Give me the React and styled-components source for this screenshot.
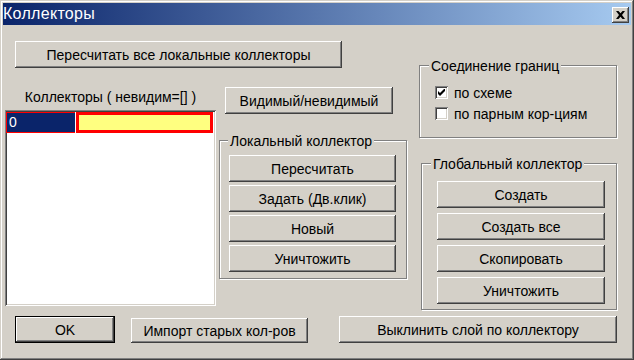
import React from "react";
import styled, { createGlobalStyle } from "styled-components";

const Global = createGlobalStyle`
  html, body { margin: 0; padding: 0; background: #d4d0c8; }
  body { font-family: "Liberation Sans", Arial, sans-serif; font-size: 14px; color: #000; }
  * { box-sizing: border-box; }
`;

const raised = `
  box-shadow: inset -1px -1px #404040, inset 1px 1px #ffffff,
    inset -2px -2px #808080, inset 2px 2px #d4d0c8;
`;

const sunken = `
  box-shadow: inset 1px 1px #808080, inset -1px -1px #ffffff,
    inset 2px 2px #404040, inset -2px -2px #d4d0c8;
`;

const Window = styled.div`
  width: 634px;
  height: 360px;
  padding: 3px;
  background: #d4d0c8;
  box-shadow: inset -1px -1px #404040, inset 1px 1px #d4d0c8,
    inset -2px -2px #808080, inset 2px 2px #ffffff;
  display: flex;
  flex-direction: column;
`;

const TitleBar = styled.div`
  height: 22px;
  flex: none;
  display: flex;
  align-items: center;
  justify-content: space-between;
  padding: 0 2px 0 0;
  background: linear-gradient(to right, #0a246a, #a6caf0);
`;

const TitleText = styled.span`
  color: #fff;
  font-size: 16px;
  line-height: 22px;
  letter-spacing: 0.3px;
`;

const CloseButton = styled.div`
  width: 17px;
  height: 16px;
  margin-top: 2px;
  background: #d4d0c8;
  ${raised}
  display: flex;
  align-items: center;
  justify-content: center;
`;

const Body = styled.div`
  flex: 1;
  margin-top: 1px;
  padding-left: 2px;
  display: flex;
  flex-direction: column;
`;

const TopArea = styled.div`
  display: flex;
  align-items: flex-start;
`;

const LeftMid = styled.div`
  width: 402px;
  display: flex;
  flex-direction: column;
`;

const Button = styled.div`
  width: ${(p) => p.$w}px;
  height: ${(p) => p.$h || 27}px;
  flex: none;
  background: #d4d0c8;
  display: flex;
  align-items: center;
  justify-content: center;
  white-space: nowrap;
  font-size: 14px;
  ${raised}
  ${(p) =>
    p.$default &&
    `border: 1px solid #000;
     box-shadow: inset -1px -1px #404040, inset 1px 1px #ffffff,
       inset -2px -2px #808080, inset 2px 2px #d4d0c8;`}
`;

const RecalcAllButton = styled(Button)`
  margin: 15px 0 0 10px;
`;

const Row = styled.div`
  display: flex;
  align-items: flex-start;
  margin-top: 19px;
`;

const ListColumn = styled.div`
  width: 211px;
  display: flex;
  flex-direction: column;
`;

const ListLabel = styled.div`
  margin-top: 2px;
  height: 16px;
  line-height: 16px;
  text-align: center;
  white-space: nowrap;
`;

const ListBox = styled.div`
  margin-top: 5px;
  height: 196px;
  background: #fff;
  padding: 2px 3px 2px 1px;
  ${sunken}
`;

const ListRow = styled.div`
  height: 21px;
  display: flex;
`;

const IndexCell = styled.div`
  width: 70px;
  background: #0a246a;
  border: 1px solid #ff0000;
  border-right: none;
  color: #fff;
  line-height: 18px;
  padding-left: 2px;
  font-size: 14px;
`;

const ColorCell = styled.div`
  flex: 1;
  background: #ffff80;
  border: 3px solid #ff0000;
  box-shadow: -1px 0 0 #fff;
`;

const MidColumn = styled.div`
  width: 188px;
  margin-left: 3px;
  display: flex;
  flex-direction: column;
`;

const VisibleButton = styled(Button)`
  margin-left: 6px;
`;

const GroupBox = styled.div`
  position: relative;
  width: ${(p) => p.$w}px;
  height: ${(p) => p.$h}px;
  border: 1px solid #808080;
  box-shadow: inset 1px 1px #ffffff, 1px 1px #ffffff;
  display: flex;
  flex-direction: column;
  gap: ${(p) => p.$gap || 0}px;
  padding: ${(p) => p.$pt}px 0 0 ${(p) => p.$pl}px;
`;

const Caption = styled.span`
  position: absolute;
  top: -8px;
  left: ${(p) => p.$left || 8}px;
  padding: 0 2px;
  height: 16px;
  line-height: 16px;
  background: #d4d0c8;
  white-space: nowrap;
`;

const LocalGroup = styled(GroupBox)`
  margin-top: 26px;
`;

const RightColumn = styled.div`
  width: 198px;
  margin-left: 12px;
  display: flex;
  flex-direction: column;
`;

const ConnGroup = styled(GroupBox)`
  margin-top: 39px;
`;

const GlobalGroup = styled(GroupBox)`
  margin-top: 25px;
  margin-left: 2px;
`;

const CheckRow = styled.div`
  height: 21px;
  display: flex;
  align-items: center;
  gap: 6px;
  white-space: nowrap;
`;

const CheckBox = styled.div`
  width: 13px;
  height: 13px;
  background: #fff;
  ${sunken}
  display: flex;
  align-items: center;
  justify-content: center;
`;

const BottomRow = styled.div`
  display: flex;
  align-items: flex-start;
  margin-top: 6px;
  padding-left: 10px;
`;

const ImportButton = styled(Button)`
  margin: 2px 0 0 16px;
`;

const ExtrudeButton = styled(Button)`
  margin-left: 31px;
`;

function Check({ checked, label }) {
  return (
    <CheckRow>
      <CheckBox>
        {checked && (
          <svg width="7" height="7" viewBox="0 0 7 7">
            <path d="M0 2 L2 4 L7 -1 V2 L2 7 L0 5 Z" fill="#000" />
          </svg>
        )}
      </CheckBox>
      <span>{label}</span>
    </CheckRow>
  );
}

export default function App() {
  return (
    <>
      <Global />
      <Window>
        <TitleBar>
          <TitleText>Коллекторы</TitleText>
          <CloseButton>
            <svg width="9" height="8" viewBox="0 0 9 8">
              <path
                d="M0 0h2.5l2 2.3 2-2.3H9L6 4l3 4H6.5l-2-2.3-2 2.3H0l3-4z"
                fill="#000"
              />
            </svg>
          </CloseButton>
        </TitleBar>
        <Body>
          <TopArea>
            <LeftMid>
              <RecalcAllButton $w={327}>
                Пересчитать все локальные коллекторы
              </RecalcAllButton>
              <Row>
                <ListColumn>
                  <ListLabel>Коллекторы ( невидим=[] )</ListLabel>
                  <ListBox>
                    <ListRow>
                      <IndexCell>0</IndexCell>
                      <ColorCell />
                    </ListRow>
                  </ListBox>
                </ListColumn>
                <MidColumn>
                  <VisibleButton $w={168}>Видимый/невидимый</VisibleButton>
                  <LocalGroup $w={188} $h={139} $pt={14} $pl={9} $gap={3}>
                    <Caption>Локальный коллектор</Caption>
                    <Button $w={167}>Пересчитать</Button>
                    <Button $w={167}>Задать (Дв.клик)</Button>
                    <Button $w={167}>Новый</Button>
                    <Button $w={167}>Уничтожить</Button>
                  </LocalGroup>
                </MidColumn>
              </Row>
            </LeftMid>
            <RightColumn>
              <ConnGroup $w={198} $h={73} $pt={16} $pl={15}>
                <Caption $left={9}>Соединение границ</Caption>
                <Check checked label="по схеме" />
                <Check label="по парным кор-циям" />
              </ConnGroup>
              <GlobalGroup $w={196} $h={147} $pt={17} $pl={15} $gap={5}>
                <Caption $left={9}>Глобальный коллектор</Caption>
                <Button $w={168}>Создать</Button>
                <Button $w={168}>Создать все</Button>
                <Button $w={168}>Скопировать</Button>
                <Button $w={168}>Уничтожить</Button>
              </GlobalGroup>
            </RightColumn>
          </TopArea>
          <BottomRow>
            <Button $w={100} $default>
              OK
            </Button>
            <ImportButton $w={177} $h={25}>
              Импорт старых кол-ров
            </ImportButton>
            <ExtrudeButton $w={278}>Выклинить слой по коллектору</ExtrudeButton>
          </BottomRow>
        </Body>
      </Window>
    </>
  );
}
